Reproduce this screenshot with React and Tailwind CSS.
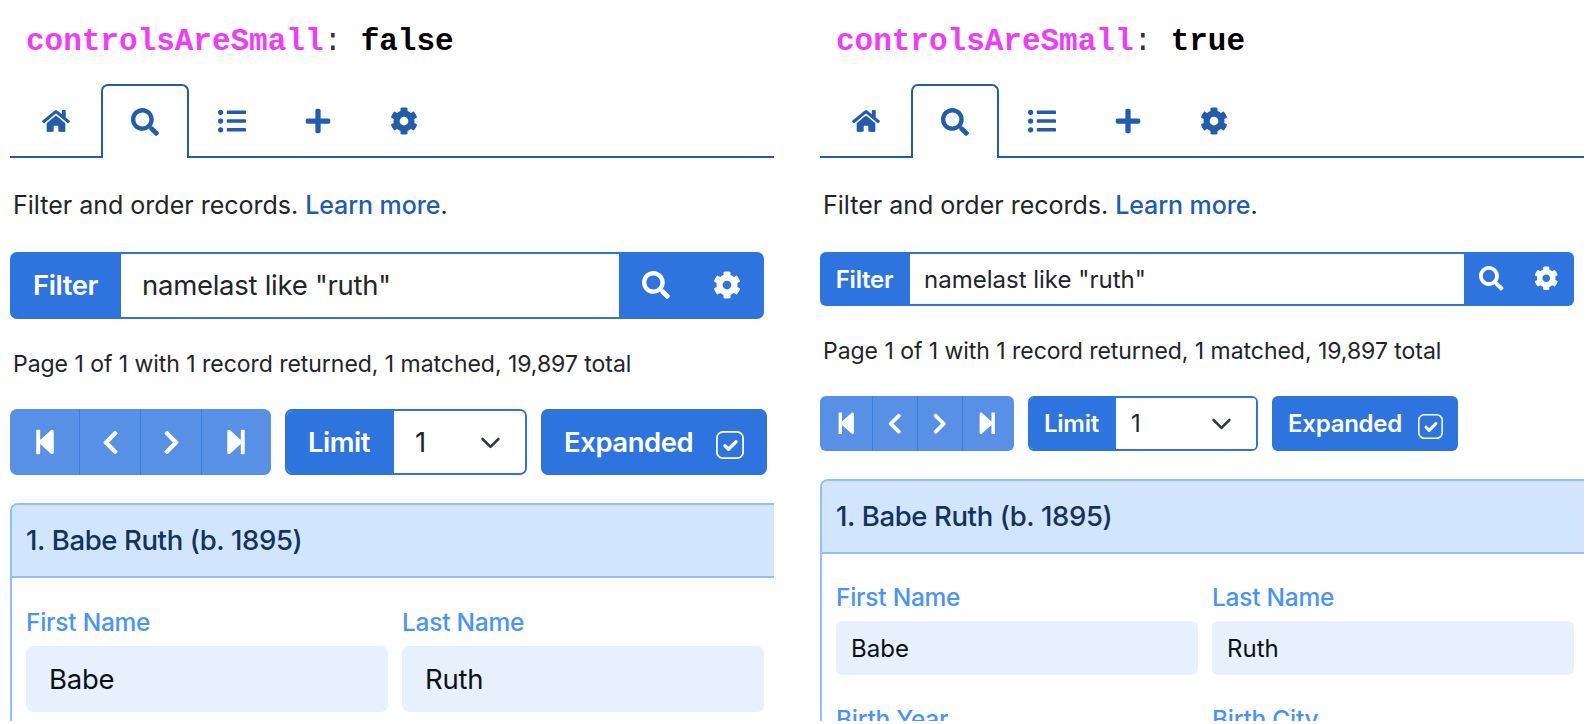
import React from "react";
import {
  FaHome,
  FaSearch,
  FaListUl,
  FaPlus,
  FaCog,
  FaStepBackward,
  FaStepForward,
  FaChevronLeft,
  FaChevronRight,
} from "react-icons/fa";

const SIZES = {
  large: {
    text: "text-[27.5px] tracking-[-0.27px]",
    strong: "text-[27.5px] tracking-[-0.45px]",
    bar: "h-[67px]",
    radius: "rounded-[7px]",
    icon: 28,
    filterLabel: "w-[111px] pt-px",
    inputPad: "pl-[21px]",
    actions: "w-[145px] pl-[23px] pb-px gap-[43px]",
    afterFilter: "h-[90px]",
    pager: "h-[66px]",
    seg: ["w-[70px]", "w-[61px]", "w-[61px]", "w-[69px]"],
    limit: "w-[242px]",
    limitLabel: "w-[109px] pr-px pt-[2px]",
    limitPad: "pl-[21px] pr-[24px] pt-px",
    expanded: "w-[226px] pl-[23px] pt-[2px]",
    check: 28,
    checkGap: "ml-auto mr-[23px] mt-[3px]",
    gap: "mt-[28px]",
    field: "h-[66px] pl-[23px] pt-px",
  },
  small: {
    text: "text-[24px] tracking-[0px]",
    strong: "text-[24px] tracking-[-0.25px]",
    bar: "h-[54px]",
    radius: "rounded-[6px]",
    icon: 24.5,
    filterLabel: "w-[90px] pr-px pt-px",
    inputPad: "pl-[14px]",
    actions: "w-[110px] pl-[15px] pb-px gap-[30px]",
    afterFilter: "h-[90px] pt-px",
    pager: "h-[55px]",
    seg: ["w-[53px]", "w-[45px]", "w-[45px]", "w-[51px]"],
    limit: "w-[230px]",
    limitLabel: "w-[88px] pr-px",
    limitPad: "pl-[15px] pr-[24px]",
    expanded: "w-[186px] pl-[16px]",
    check: 25,
    checkGap: "ml-auto mr-[15px] mt-[6px]",
    gap: "mt-[28px]",
    field: "h-[54px] pl-[15px] pt-px",
  },
};

function Tab({ children, className }) {
  return (
    <div className={"flex items-center justify-center border-b-2 border-[#215cad] pt-[2px] " + className}>
      {children}
    </div>
  );
}

function Tabs() {
  return (
    <div className="flex h-[74px] text-[28px] text-[#215cad]">
      <Tab className="w-[91px]"><FaHome /></Tab>
      <div className="flex w-[88px] items-center justify-center rounded-t-[7px] border-x-2 border-t-2 border-[#215cad] pb-px">
        <FaSearch />
      </div>
      <Tab className="w-[86px]"><FaListUl /></Tab>
      <Tab className="w-[86px] pr-px"><FaPlus /></Tab>
      <Tab className="w-[85px]"><FaCog /></Tab>
      <Tab className="flex-1" />
    </div>
  );
}

function Checkbox({ size }) {
  return (
    <svg width={size} height={size} viewBox="0 0 28 28" fill="none" stroke="#fff">
      <rect x="0.9" y="0.9" width="26.2" height="26.2" rx="6.2" strokeWidth="1.75" />
      <path d="M9 14.8l3.5 3.5L20 10.8" strokeWidth="3.4" strokeLinecap="round" strokeLinejoin="round" />
    </svg>
  );
}

function SelectArrow() {
  return (
    <svg width="21" height="14" viewBox="0 0 21 14" fill="none" stroke="#343a40" strokeWidth="2.6" strokeLinecap="round" strokeLinejoin="round">
      <path d="M2.6 3L10.5 10.9L18.4 3" />
    </svg>
  );
}

function Field({ label, value, s }) {
  return (
    <div className="flex w-[362px] flex-col">
      <div className="flex h-12 shrink-0 items-center whitespace-nowrap pt-px text-[24.5px] font-[550] tracking-[-0.25px] text-[#4894fb]">{label}</div>
      <div className={"flex shrink-0 items-center bg-[#e7f1fe] text-[#0a1018] " + s.field + " " + s.radius + " " + s.text}>
        {value}
      </div>
    </div>
  );
}

function Panel({ value, size, rows, fieldsTop }) {
  const s = SIZES[size];
  return (
    <section className="flex h-[721px] w-[764px] shrink-0 flex-col overflow-hidden">
      <h1 className="flex h-[84px] shrink-0 items-center whitespace-pre pl-[16px] font-['Liberation_Mono',monospace] text-[31px] font-bold tracking-[-0.01px]">
        <span className="text-[#ee3cf7]">controlsAreSmall</span>
        <span className="font-normal text-[#333333]">: </span>
        <span className="text-black">{value}</span>
      </h1>
      <div className="shrink-0"><Tabs /></div>
      <p className="flex h-[94px] shrink-0 items-center whitespace-pre pl-[3px] pt-[2px] text-[25px]">
        Filter and order records. <a className="font-[550] tracking-[-0.1px] text-[#215cad]">Learn more</a>.
      </p>

      <div className={"mr-[10px] flex shrink-0 overflow-hidden bg-[#2d74de] " + s.bar + " " + s.radius}>
        <div className={"flex items-center justify-center font-semibold text-white " + s.filterLabel + " " + s.strong}>Filter</div>
        <div className={"my-[2px] flex flex-1 items-center bg-white pt-px " + s.inputPad + " " + s.text}>namelast like "ruth"</div>
        <div className={"flex items-center text-white " + s.actions}>
          <FaSearch size={s.icon} />
          <FaCog size={s.icon} />
        </div>
      </div>

      <p className={"flex shrink-0 items-center whitespace-nowrap pl-[3px] text-[23px] tracking-[-0.04px] " + s.afterFilter}>
        Page 1 of 1 with 1 record returned, 1 matched, 19,897 total
      </p>

      <div className={"flex shrink-0 gap-[14px] " + s.pager}>
        <div className={"flex overflow-hidden bg-[#5890e5] text-white " + s.radius}>
          <div className={"flex items-center justify-center border-r border-[#3a7de1] " + s.seg[0]}><FaStepBackward size={s.icon} /></div>
          <div className={"flex items-center justify-center border-r border-[#3a7de1] " + s.seg[1]}><FaChevronLeft size={s.icon - 1} /></div>
          <div className={"flex items-center justify-center border-r border-[#3a7de1] " + s.seg[2]}><FaChevronRight size={s.icon - 1} /></div>
          <div className={"flex items-center justify-center pr-[2px] " + s.seg[3]}><FaStepForward size={s.icon} /></div>
        </div>
        <div className={"flex overflow-hidden border-2 border-[#2d74de] " + s.limit + " " + s.radius}>
          <div className={"-ml-[2px] flex items-center justify-center bg-[#2d74de] font-semibold text-white " + s.limitLabel + " " + s.strong}>Limit</div>
          <div className={"flex flex-1 items-center justify-between bg-white " + s.limitPad + " " + s.text}>
            1
            <SelectArrow />
          </div>
        </div>
        <div className={"flex items-center bg-[#2d74de] font-semibold text-white " + s.expanded + " " + s.radius + " " + s.strong}>
          Expanded
          <div className={s.checkGap}><Checkbox size={s.check} /></div>
        </div>
      </div>

      <div className={"flex flex-1 flex-col rounded-tl-[8px] border-l-2 border-t-2 border-[#8fc0fd] " + s.gap}>
        <div className="flex h-[73px] shrink-0 items-center rounded-tl-[6px] border-b-2 border-[#8fc0fd] bg-[#d1e5fd] pl-[14px] pt-px text-[27.5px] font-medium tracking-[-0.37px] text-[#12325f]">
          1. Babe Ruth (b. 1895)
        </div>
        <div className={"flex h-0 flex-1 flex-col gap-[20px] pl-[14px] " + fieldsTop}>
          {rows.map((row) => (
            <div key={row[0].label} className="flex shrink-0 gap-[14px]">
              {row.map((f) => (
                <Field key={f.label} label={f.label} value={f.value} s={s} />
              ))}
            </div>
          ))}
        </div>
      </div>
    </section>
  );
}

const NAME_ROW = [
  { label: "First Name", value: "Babe" },
  { label: "Last Name", value: "Ruth" },
];
const BIRTH_ROW = [
  { label: "Birth Year", value: "" },
  { label: "Birth City", value: "" },
];

export default function App() {
  return (
    <main className="flex h-[724px] w-[1590px] gap-[46px] overflow-hidden bg-white pl-[10px] font-['Inter',sans-serif] text-[#212529]">
      <Panel value="false" size="large" rows={[NAME_ROW]} fieldsTop="pt-[20px]" />
      <Panel value="true" size="small" rows={[NAME_ROW, BIRTH_ROW]} fieldsTop="pt-[19px]" />
    </main>
  );
}
